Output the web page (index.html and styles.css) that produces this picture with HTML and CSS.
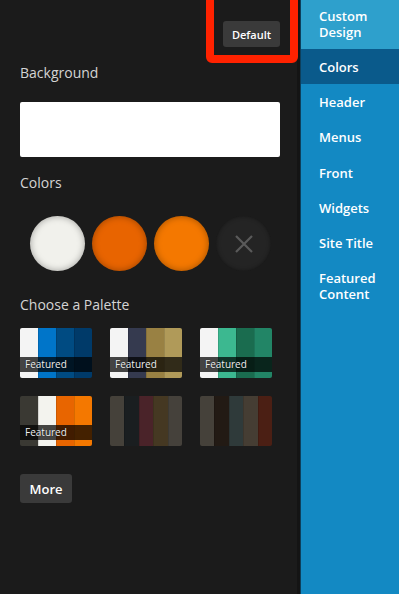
FILE: index.html
```html
<!DOCTYPE html>
<html lang="en">
<head>
  <meta charset="UTF-8" />
  <meta name="viewport" content="width=device-width, initial-scale=1.0"/>
  <title>Custom Design - Colors</title>
  <link rel="stylesheet" href="styles.css">
</head>
<body>

  <div class="layout">
    <div class="panel">
      <div class="panel-top">
        <button class="btn">Default</button>
        <div class="highlight"></div>
      </div>

      <div class="label">Background</div>
      <div class="bg-box"></div>

      <div class="label">Colors</div>
      <div class="swatches">
        <div class="swatch white"></div>
        <div class="swatch orange-dark"></div>
        <div class="swatch orange"></div>
        <div class="swatch clear">
          <svg width="20" height="20" viewBox="0 0 20 20">
            <path d="M2 2 L18 18 M18 2 L2 18" stroke="#5a5a5a" stroke-width="2.2" fill="none"/>
          </svg>
        </div>
      </div>

      <div class="label palette-label">Choose a Palette</div>
      <div class="palettes">
        <div class="palette">
          <span style="background:#f4f4f4"></span>
          <span style="background:#0075c9"></span>
          <span style="background:#004b82"></span>
          <span style="background:#003a69"></span>
          <div class="featured">Featured</div>
        </div>
        <div class="palette">
          <span style="background:#f4f4f4"></span>
          <span style="background:#353a4f"></span>
          <span style="background:#998143"></span>
          <span style="background:#b09a59"></span>
          <div class="featured">Featured</div>
        </div>
        <div class="palette">
          <span style="background:#f4f4f4"></span>
          <span style="background:#3cb890"></span>
          <span style="background:#1a6c4f"></span>
          <span style="background:#228566"></span>
          <div class="featured">Featured</div>
        </div>
        <div class="palette">
          <span style="background:#3a3933"></span>
          <span style="background:#f3f3ee"></span>
          <span style="background:#e86500"></span>
          <span style="background:#f47800"></span>
          <div class="featured">Featured</div>
        </div>
        <div class="palette">
          <span style="background:#45413a"></span>
          <span style="background:#1a1e20"></span>
          <span style="background:#4a2329"></span>
          <span style="background:#453822"></span>
          <span style="background:#45413b"></span>
        </div>
        <div class="palette">
          <span style="background:#45413a"></span>
          <span style="background:#221a14"></span>
          <span style="background:#2f3a3a"></span>
          <span style="background:#453d33"></span>
          <span style="background:#4b1f14"></span>
        </div>
      </div>

      <button class="btn more">More</button>
    </div>

    <ul class="nav">
      <li class="nav-item first">Custom Design</li>
      <li class="nav-item active">Colors</li>
      <li class="nav-item">Header</li>
      <li class="nav-item">Menus</li>
      <li class="nav-item">Front</li>
      <li class="nav-item">Widgets</li>
      <li class="nav-item">Site Title</li>
      <li class="nav-item">Featured Content</li>
    </ul>
  </div>

</body>
</html>
```

FILE: styles.css
```css
html, body {
  margin: 0;
  padding: 0;
  height: 100%;
  overflow: hidden;
  font-family: 'Open Sans', sans-serif;
  background: #1b1b1b;
}

.layout {
  display: flex;
  height: 100%;
}

.panel {
  box-sizing: border-box;
  width: 300px;
  flex: none;
  padding: 21px 17px 0 20px;
  background: #1b1b1b;
  border-right: 3px solid #141414;
  position: relative;
}

.panel-top {
  display: flex;
  justify-content: flex-end;
  height: 26px;
  position: relative;
}

.highlight {
  position: absolute;
  top: -30px;
  right: -18px;
  width: 76px;
  height: 56px;
  border: 8px solid #ff2200;
  border-radius: 6px;
  pointer-events: none;
}

.btn {
  font-family: 'Open Sans', sans-serif;
  background-color: #3a3a3a;
  color: #fff;
  border: none;
  border-radius: 3px;
  cursor: pointer;
  padding: 0;
}

.panel-top .btn {
  width: 57px;
  height: 26px;
  font-size: 11px;
  font-weight: 600;
}

.label {
  color: #d4d4d4;
  font-size: 14px;
  line-height: 20px;
  margin-top: 16px;
}

.bg-box {
  margin-top: 19px;
  height: 55px;
  background: #fff;
  border-radius: 2px;
}

.swatches {
  display: flex;
  gap: 7px;
  margin-top: 23px;
  padding-left: 10px;
}

.swatch {
  width: 55px;
  height: 55px;
  border-radius: 50%;
  box-shadow: inset 0 0 7px rgba(0, 0, 0, 0.35);
  display: flex;
  justify-content: center;
  align-items: center;
}

.swatch.white { background: #f1f1ec; }
.swatch.orange-dark { background: #e86400; }
.swatch.orange { background: #f47800; }
.swatch.clear {
  background: #242424;
  box-shadow: inset 0 0 4px rgba(0, 0, 0, 0.4);
}

.palette-label {
  margin-top: 24px;
}

.palettes {
  display: grid;
  grid-template-columns: repeat(3, 72px);
  column-gap: 18px;
  row-gap: 18px;
  margin-top: 13px;
}

.palette {
  height: 50px;
  display: flex;
  border-radius: 2px;
  overflow: hidden;
  position: relative;
}

.palette span {
  flex: 1;
  box-shadow: inset 1px 0 0 rgba(0, 0, 0, 0.12);
}

.palette span:first-child {
  box-shadow: none;
}

.featured {
  position: absolute;
  left: 0;
  right: 0;
  top: 29px;
  height: 15px;
  line-height: 15px;
  padding-left: 5px;
  background: rgba(0, 0, 0, 0.72);
  color: #f2f2f2;
  font-size: 10px;
  text-shadow: 0 0 1px #000;
}

.more {
  margin-top: 28px;
  width: 52px;
  height: 29px;
  font-size: 13px;
  font-weight: 600;
}

.nav {
  list-style: none;
  margin: 0;
  padding: 0;
  flex: 1;
  background: #1389c3;
  border-left: 1px solid #0d3f5c;
}

.nav-item {
  color: #fff;
  font-size: 13px;
  font-weight: 600;
  line-height: 16px;
  padding: 10px 6px 9.2px 18px;
}

.nav-item.first {
  background: #2ea0cc;
  padding-top: 8px;
  padding-bottom: 9px;
}

.nav-item.active {
  background: #0a5a8b;
}
```
